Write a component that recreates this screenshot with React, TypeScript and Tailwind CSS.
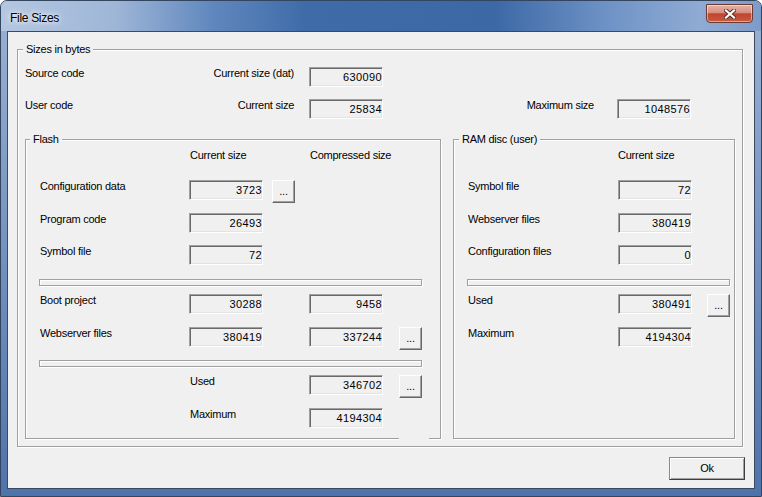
import type { ReactNode } from "react";

function Legend({ children, className = "" }: { children: ReactNode; className?: string }) {
  return (
    <div className={`-mt-[7px] h-[13px] w-fit self-start whitespace-nowrap bg-[#f0f0f0] px-[3px] ${className}`}>
      {children}
    </div>
  );
}

function Field({ value, className = "" }: { value: string; className?: string }) {
  return (
    <div
      className={`flex h-[20px] w-[74px] shrink-0 items-center justify-end border border-t-[#a0a0a0] border-l-[#a0a0a0] border-r-white border-b-white bg-[#f0f0f0] tracking-[0.4px] shadow-[inset_1px_1px_0_#696969,inset_-1px_-1px_0_#e3e3e3] ${className}`}
    >
      {value}
    </div>
  );
}

function Dots({ className = "" }: { className?: string }) {
  return (
    <div
      className={`flex h-[23px] w-[23px] shrink-0 items-center justify-center border border-t-white border-l-white border-r-[#696969] border-b-[#696969] bg-[#f0f0f0] shadow-[inset_-1px_-1px_0_#a0a0a0] ${className}`}
    >
      ...
    </div>
  );
}

function Groove({ className = "" }: { className?: string }) {
  return (
    <div
      className={`h-[7px] shrink-0 border border-[#a0a0a0] bg-[#f0f0f0] shadow-[inset_1px_1px_0_#fff,1px_1px_0_#fff] ${className}`}
    />
  );
}

export default function App() {
  return (
    <div className="flex h-[497px] w-[762px] flex-col overflow-hidden rounded-t-[7px] border border-[#34465f] bg-[linear-gradient(to_bottom,#9bb2d4,#4e73ab)] font-['Liberation_Sans',Arial,sans-serif] text-[11px] leading-[13px] tracking-[-0.25px] text-black">
      {/* title bar */}
      <div className="flex h-[30px] shrink-0 items-start justify-between bg-[linear-gradient(to_right,#b3c7e1_0%,#9fb6d7_15%,#5f87bd_28%,#3f6ca8_40%,#3c69a5_65%,#6f93c6_80%,#8fabd4_92%,#7d9bc9_100%)]">
        <div className="pl-[9px] pt-[10px] text-[12px] leading-[14px] tracking-[-0.3px] [text-shadow:0_0_8px_#fff,0_0_4px_#fff]">
          File Sizes
        </div>
        <div className="mr-[8px] mt-[3px] flex h-[19px] w-[47px] items-center justify-center rounded-b-[4px] border border-[#6b3a32] bg-[linear-gradient(to_bottom,#e3b2a8_0%,#d98f80_45%,#c0452f_52%,#c65c42_100%)] shadow-[inset_0_0_0_1px_rgba(255,255,255,0.45)]">
          <svg width="12" height="10" viewBox="0 0 12 10">
            <path d="M2 1.5 L10 8.5 M10 1.5 L2 8.5" stroke="#5a2a22" strokeWidth="4" strokeLinecap="square" />
            <path d="M2 1.5 L10 8.5 M10 1.5 L2 8.5" stroke="#fff" strokeWidth="2.2" strokeLinecap="square" />
          </svg>
        </div>
      </div>

      {/* frame + client */}
      <div className="flex flex-1 px-[6px] pb-[7px]">
        <div className="flex flex-1 flex-col border border-[#3b4a61] bg-[#f0f0f0] pl-[9px] pt-[17px]">
          {/* Sizes in bytes */}
          <div className="flex h-[398px] w-[726px] flex-col border border-[#a0a0a0] shadow-[inset_1px_1px_0_#fff,1px_1px_0_#fff]">
            <Legend className="ml-[5px]">Sizes in bytes</Legend>

            <div className="mt-[11px] flex h-[20px] pl-[7px]">
              <div className="w-[169px]">Source code</div>
              <div className="w-[100px] whitespace-nowrap text-right">Current size (dat)</div>
              <Field className="ml-[15px]" value="630090" />
            </div>

            <div className="mt-[12px] flex h-[20px] pl-[7px]">
              <div className="w-[169px]">User code</div>
              <div className="w-[100px] whitespace-nowrap text-right">Current size</div>
              <Field className="ml-[15px]" value="25834" />
              <div className="w-[211px] whitespace-nowrap text-right">Maximum size</div>
              <Field className="ml-[23px]" value="1048576" />
            </div>

            <div className="mt-[20px] flex gap-[12px] pl-[7px]">
              {/* Flash */}
              <div className="flex h-[300px] w-[416px] flex-col border border-[#a0a0a0] shadow-[inset_1px_1px_0_#fff,1px_1px_0_#fff]">
                <Legend className="ml-[4px]">Flash</Legend>
                <div className="mt-[3px] flex h-[13px] whitespace-nowrap">
                  <div className="ml-[164px] w-[120px]">Current size</div>
                  <div>Compressed size</div>
                </div>

                <div className="mt-[18px] flex h-[20px] pl-[14px]">
                  <div className="w-[149px]">Configuration data</div>
                  <Field value="3723" />
                  <Dots className="ml-[9px]" />
                </div>
                <div className="mt-[13px] flex h-[20px] pl-[14px]">
                  <div className="w-[149px]">Program code</div>
                  <Field value="26493" />
                </div>
                <div className="mt-[12px] flex h-[20px] pl-[14px]">
                  <div className="w-[149px]">Symbol file</div>
                  <Field value="72" />
                </div>

                <Groove className="ml-[13px] mt-[14px] w-[383px]" />

                <div className="mt-[8px] flex h-[20px] pl-[14px]">
                  <div className="w-[149px]">Boot project</div>
                  <Field value="30288" />
                  <Field className="ml-[46px]" value="9458" />
                </div>
                <div className="mt-[13px] flex h-[20px] pl-[14px]">
                  <div className="w-[149px]">Webserver files</div>
                  <Field value="380419" />
                  <Field className="ml-[46px]" value="337244" />
                  <Dots className="ml-[16px]" />
                </div>

                <Groove className="ml-[13px] mt-[13px] w-[383px]" />

                <div className="mt-[8px] flex h-[20px] pl-[164px]">
                  <div className="w-[119px]">Used</div>
                  <Field value="346702" />
                  <Dots className="ml-[16px]" />
                </div>
                <div className="mt-[13px] flex h-[20px] pl-[164px]">
                  <div className="w-[119px]">Maximum</div>
                  <Field value="4194304" />
                </div>

                <div className="-mb-[2px] ml-[373px] mt-auto h-[2px] w-[30px] bg-[#f0f0f0]" />
              </div>

              {/* RAM disc */}
              <div className="flex h-[300px] w-[282px] flex-col border border-[#a0a0a0] shadow-[inset_1px_1px_0_#fff,1px_1px_0_#fff]">
                <Legend className="ml-[5px]">RAM disc (user)</Legend>
                <div className="mt-[3px] h-[13px] whitespace-nowrap pl-[164px]">Current size</div>

                <div className="mt-[18px] flex h-[20px] pl-[14px]">
                  <div className="w-[150px]">Symbol file</div>
                  <Field value="72" />
                </div>
                <div className="mt-[13px] flex h-[20px] pl-[14px]">
                  <div className="w-[150px]">Webserver files</div>
                  <Field value="380419" />
                </div>
                <div className="mt-[12px] flex h-[20px] pl-[14px]">
                  <div className="w-[150px]">Configuration files</div>
                  <Field value="0" />
                </div>

                <Groove className="ml-[13px] mt-[14px] w-[263px]" />

                <div className="mt-[8px] flex h-[20px] pl-[14px]">
                  <div className="w-[150px]">Used</div>
                  <Field value="380491" />
                  <Dots className="ml-[15px]" />
                </div>
                <div className="mt-[13px] flex h-[20px] pl-[14px]">
                  <div className="w-[150px]">Maximum</div>
                  <Field value="4194304" />
                </div>
              </div>
            </div>
          </div>

          <div className="mr-[9px] mt-[10px] flex h-[23px] w-[76px] items-center justify-center self-end border border-t-[#8a8a8a] border-l-[#8a8a8a] border-r-[#404040] border-b-[#404040] bg-[#f0f0f0] shadow-[inset_1px_1px_0_#fff,inset_-1px_-1px_0_#a0a0a0]">
            Ok
          </div>
        </div>
      </div>
    </div>
  );
}
